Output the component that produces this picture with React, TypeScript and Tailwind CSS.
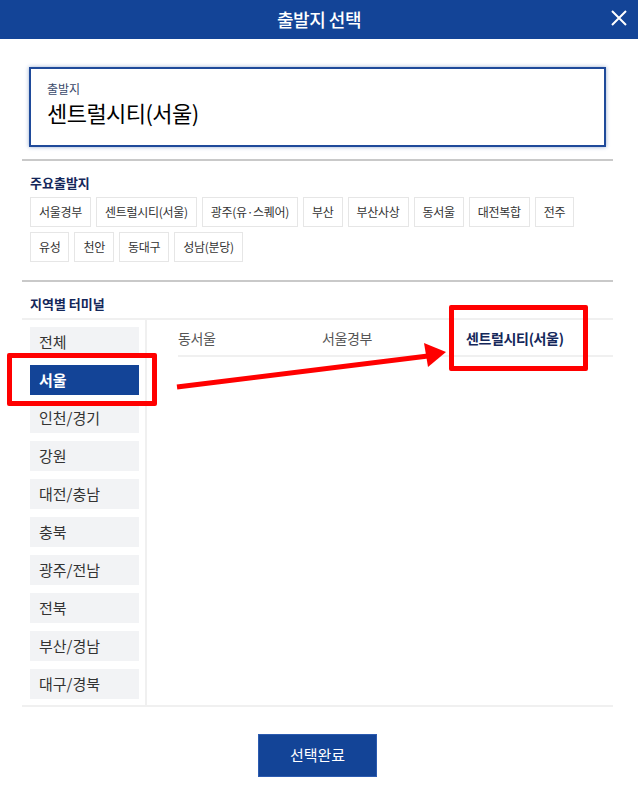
const majors = [
  "서울경부",
  "센트럴시티(서울)",
  "광주(유·스퀘어)",
  "부산",
  "부산사상",
  "동서울",
  "대전복합",
  "전주",
  "유성",
  "천안",
  "동대구",
  "성남(분당)",
];

const regions = [
  "전체",
  "서울",
  "인천/경기",
  "강원",
  "대전/충남",
  "충북",
  "광주/전남",
  "전북",
  "부산/경남",
  "대구/경북",
];

const terminals = ["동서울", "서울경부", "센트럴시티(서울)"];

export default function App() {
  return (
    <div
      className="relative w-[638px] h-[800px] bg-white overflow-hidden"
      style={{ fontFamily: '"Noto Sans CJK KR", "Noto Sans", sans-serif' }}
    >
      <header className="relative h-[39px] bg-[#134497] flex items-center justify-center">
        <h1 className="text-white text-[18px] font-medium tracking-tight">출발지 선택</h1>
        <button className="absolute right-[10px] top-[9px] text-white">
          <svg width="18" height="18" viewBox="0 0 18 18" fill="none" stroke="currentColor" strokeWidth="2">
            <path d="M2 2 L16 16 M16 2 L2 16" />
          </svg>
        </button>
      </header>

      <div className="pl-[22px] pr-[25px]">
        {/* current selection */}
        <div className="pt-[28px] pb-[12px] px-[7px] border-b-2 border-[#c9c9c9]">
          <div className="h-[80px] border-2 border-[#1f4a9a] shadow-[0_0_4px_rgba(19,68,151,0.45)] px-[16px] pt-[12px]">
            <div className="text-[12px] leading-[16px] text-[#3b4a6b]">출발지</div>
            <div className="text-[22px] leading-[30px] text-black tracking-tight">센트럴시티(서울)</div>
          </div>
        </div>

        {/* major terminals */}
        <div className="pt-[12px] pb-[18px] pl-[8px] pr-[24px] border-b-2 border-[#c9c9c9]">
          <h2 className="text-[13px] leading-[20px] font-bold text-[#14275a] mb-[4px]">주요출발지</h2>
          <div className="flex flex-wrap gap-x-[5px] gap-y-[5px]">
            {majors.map((m) => (
              <span
                key={m}
                className="h-[30px] px-[8px] flex items-center border border-[#e6e6e6] text-[12px] text-[#333] tracking-tight"
              >
                {m}
              </span>
            ))}
          </div>
        </div>

        {/* by region */}
        <div className="pt-[12px] pl-[8px]">
          <h2 className="text-[13px] leading-[20px] font-bold text-[#14275a]">지역별 터미널</h2>
        </div>
        <div className="mt-[4px] flex border-t-2 border-b-2 border-[#f0f0f0]">
          <ul className="w-[125px] border-r-2 border-[#f0f0f0] pl-[8px] pr-[6px] pt-[7px] pb-[6px] flex flex-col gap-[8px]">
            {regions.map((r) => (
              <li
                key={r}
                className={
                  r === "서울"
                    ? "h-[30px] flex items-center px-[9px] bg-[#134497] text-white text-[15px] font-bold"
                    : "h-[30px] flex items-center px-[9px] bg-[#f2f3f5] text-[#333] text-[15px]"
                }
              >
                {r}
              </li>
            ))}
          </ul>
          <div className="flex-1 pl-[31px] pt-[2px]">
            <div className="flex border-b-2 border-[#f0f0f0] h-[35px] items-center">
              {terminals.map((t) => (
                <span
                  key={t}
                  className={
                    t === "센트럴시티(서울)"
                      ? "w-[146px] text-[14px] font-bold text-[#14275a] tracking-tight"
                      : "w-[144px] text-[14px] text-[#555] tracking-tight"
                  }
                >
                  {t}
                </span>
              ))}
            </div>
          </div>
        </div>

        <div className="flex justify-center pt-[27px]">
          <button className="w-[119px] h-[43px] bg-[#134497] border border-[#2c5bb0] text-white text-[15px]">
            선택완료
          </button>
        </div>
      </div>

      {/* red annotations */}
      <div className="absolute left-[7px] top-[353px] w-[150px] h-[53px] border-[5px] border-[#ff0000] rounded-[2px]" />
      <div className="absolute left-[449px] top-[305px] w-[139px] h-[66px] border-[5px] border-[#ff0000] rounded-[2px]" />
      <svg className="absolute left-0 top-0" width="638" height="800">
        <line x1="177" y1="387" x2="428" y2="356" stroke="#ff0000" strokeWidth="5" />
        <polygon points="446,352 424,343 428,367" fill="#ff0000" />
      </svg>
    </div>
  );
}
